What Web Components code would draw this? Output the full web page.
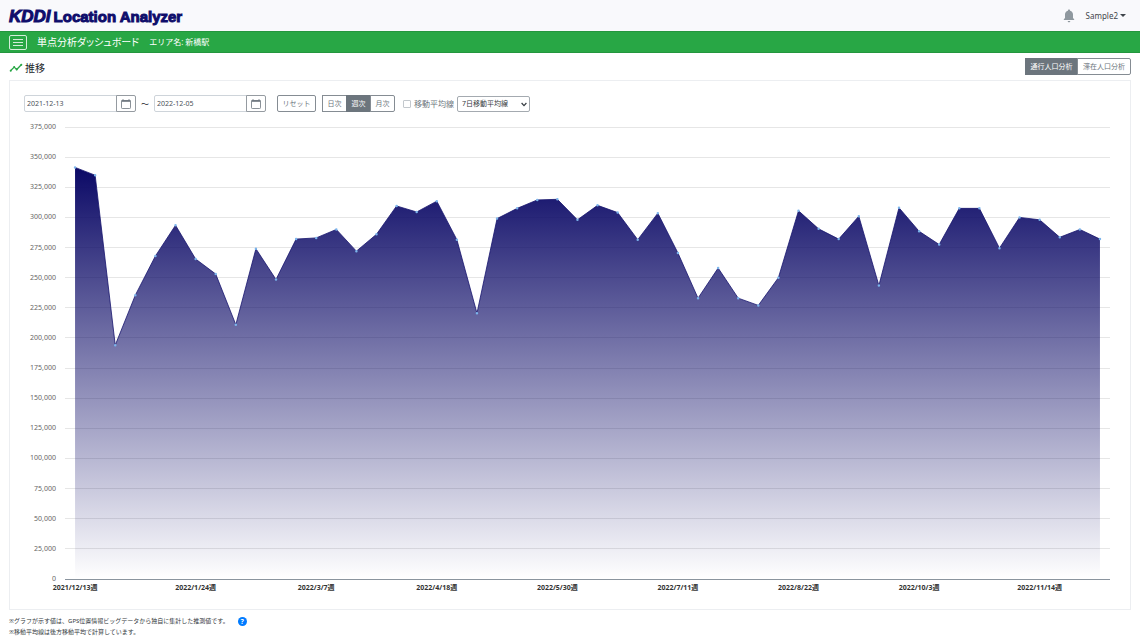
<!DOCTYPE html>
<html lang="ja">
<head>
<meta charset="utf-8">
<title>KDDI Location Analyzer</title>
<style>
  body { margin: 0; font: 8px/12px "Noto Sans", "Noto Sans CJK JP", sans-serif; color: #212529; background: #fff; }
</style>
</head>
<body>
<la-page>
  <la-header slot="header" user="Sample2"></la-header>
  <la-titlebar slot="header" heading="単点分析ダッシュボード">エリア名: 新橋駅</la-titlebar>
  <la-section heading="推移">
    <la-toggle slot="actions" class="wide" options="通行人口分析,滞在人口分析" selected="0"></la-toggle>
    <la-filters></la-filters>
    <la-chart></la-chart>
  </la-section>
  <la-notes slot="footer"></la-notes>
</la-page>
<script>
const define = (name, markup, setup) => customElements.define(name, class extends HTMLElement {
  connectedCallback() {
    if (this.shadowRoot) return;
    this.attachShadow({ mode: 'open' }).innerHTML = markup(this);
    if (setup) setup(this, this.shadowRoot);
  }
});
const attr = (el, name) => el.getAttribute(name) || '';

define('la-page', () => `
<style>
  :host { display: flex; flex-direction: column; min-height: 100vh; }
  main { flex: 1; display: flex; flex-direction: column; padding: 0 9px; }
</style>
<slot name="header"></slot>
<main><slot></slot></main>
<slot name="footer"></slot>`);

define('la-header', el => `
<style>
  :host { display: flex; align-items: center; justify-content: space-between; height: 31px; padding: 0 14px 0 9px; background: #f9f9fc; box-sizing: border-box; }
  a { display: flex; align-items: baseline; gap: 3px; padding-top: 2px; color: #0f0d6b; text-decoration: none; font: bold 15px/20px Impact, "Liberation Sans Narrow", "Liberation Sans", sans-serif; -webkit-text-stroke: 1px #0f0d6b; }
  .mark { font: italic bold 17px/20px "Liberation Sans", sans-serif; }
  .user { display: flex; align-items: center; gap: 11px; }
  button { display: flex; align-items: center; gap: 2px; border: 0; padding: 0; background: none; font: inherit; color: #3f454b; }
  .caret { border: 3px solid transparent; border-top-color: #3f454b; border-bottom: 0; }
  svg { display: block; }
</style>
<a href="#"><span class="mark">KDDI</span><span>Location Analyzer</span></a>
<div class="user">
  <button aria-label="お知らせ"><svg width="12" height="14" viewBox="0 0 12 14" fill="#8f989f"><path d="M6 .6c-.7 0-1.100.5-1.100 1.100C3 2.200 2 3.700 2 5.600V9L.8 10.300v.7h10.400v-.7L10 9V5.600c0-1.900-1-3.400-2.900-3.900C7.100 1.100 6.700.6 6 .6zM4.700 11.900c0 .8.600 1.300 1.300 1.300s1.300-.5 1.300-1.300z"/></svg></button>
  <button>${attr(el, 'user')}<span class="caret"></span></button>
</div>`);

define('la-titlebar', el => `
<style>
  :host { display: flex; align-items: center; gap: 10px; height: 22px; padding: 0 9px; box-sizing: border-box; background: #28a745; border-top: 1px solid #23963e; border-bottom: 1px solid #23963e; color: #fff; }
  button { display: flex; align-items: center; justify-content: center; width: 18px; height: 15px; padding: 0; background: none; border: 1px solid #d4eeda; border-radius: 2px; }
  h1 { margin: 0; font-size: 10px; line-height: 14px; font-weight: 400; font-feature-settings: "palt"; }
</style>
<button aria-label="メニュー"><svg width="10" height="8" viewBox="0 0 10 8" stroke="#fff"><path d="M0 1.500h10M0 4.500h10M0 7.500h10" stroke-width=".8"/></svg></button>
<h1>${attr(el, 'heading')}</h1><slot></slot>`);

define('la-section', el => `
<style>
  :host { flex: 1; display: flex; flex-direction: column; }
  header { display: flex; align-items: center; justify-content: space-between; height: 27px; }
  h2 { display: flex; align-items: center; gap: 2px; margin: 0; padding-top: 2px; font-size: 10px; line-height: 14px; font-weight: 400; }
  .card { flex: 1; display: flex; flex-direction: column; padding: 14px 20px 15px 14px; border: 1px solid #eceef1; }
</style>
<header>
  <h2><svg width="14" height="10" viewBox="0 0 14 10" fill="none" stroke="#28a745" stroke-width="1.300" stroke-linejoin="round"><path d="M1.500 7.800l3.700-3.700 2.500 2.400L12.500 1.500"/><g fill="#28a745" stroke="none"><circle cx="1.700" cy="7.700" r="1"/><circle cx="5.200" cy="4.100" r="1"/><circle cx="7.700" cy="6.500" r="1"/><circle cx="12.300" cy="1.700" r="1"/></g></svg>${attr(el, 'heading')}</h2>
  <slot name="actions"></slot>
</header>
<div class="card"><slot></slot></div>`);

define('la-toggle', el => `
<style>
  :host { display: flex; }
  button { width: 25px; height: 17px; padding: 0; border: 1px solid #858c93; background: #fff; color: #6c757d; font: inherit; font-size: 7px; line-height: 14px; }
  :host(.wide) button { width: 53px; }
  :host(.wide) button + button { width: 54px; }
  button + button { margin-left: -1px; }
  button:first-child { border-radius: 2px 0 0 2px; }
  button:last-child { border-radius: 0 2px 2px 0; }
  button[aria-pressed=true] { background: #6c757d; border-color: #6c757d; color: #fff; }
</style>
${attr(el, 'options').split(',').map((t, i) => `<button aria-pressed="${i == attr(el, 'selected')}">${t}</button>`).join('')}`,
(el, root) => {
  root.addEventListener('click', e => {
    if (e.target.matches('button')) root.querySelectorAll('button').forEach(b => b.setAttribute('aria-pressed', b === e.target));
  });
});

define('la-date', el => `
<style>
  :host { display: flex; height: 17px; width: 112px; }
  input { flex: 1; min-width: 0; box-sizing: border-box; padding: 0 2px; border: 1px solid #ced4da; border-radius: 2px 0 0 2px; font: inherit; font-size: 7px; color: #495057; }
  button { display: flex; align-items: center; justify-content: center; width: 20px; margin-left: -1px; padding: 0; background: #fff; border: 1px solid #959ba1; border-radius: 0 2px 2px 0; }
</style>
<input type="text" aria-label="${attr(el, 'label')}" value="${attr(el, 'value')}">
<button aria-label="カレンダー"><svg width="10" height="10" viewBox="0 0 10 10" fill="none" stroke="#6c757d"><rect x=".5" y="1.500" width="9" height="8" rx=".8" stroke-width=".8"/><path d="M.5 2h9" stroke-width="1.600"/><path d="M2 0v2M8 0v2" stroke-width=".8"/></svg></button>`);

define('la-filters', () => `
<style>
  :host { display: flex; align-items: center; height: 17px; }
  .tilde { width: 18px; text-align: center; }
  .reset { width: 39px; height: 17px; margin: 0 6px 0 11px; padding: 0; border: 1px solid #858c93; border-radius: 2px; background: #fff; color: #6c757d; font: inherit; font-size: 7px; }
  input { appearance: none; width: 8px; height: 8px; margin: 0 3px 0 8px; border: 1px solid #c3c8cd; border-radius: 1px; background: #fff; box-sizing: border-box; }
  input:checked { background: #6c757d; }
  label { font-size: 8px; color: #6c757d; margin-right: 3px; }
  .select { position: relative; }
  select { appearance: none; display: block; width: 73px; height: 16px; padding: 0 4px; border: 1px solid #a4aab0; border-radius: 2px; background: #fff; font: inherit; font-size: 7px; color: #343a40; }
  svg { position: absolute; right: 3px; top: 6px; pointer-events: none; }
</style>
<la-date label="開始日" value="2021-12-13"></la-date>
<span class="tilde">～</span>
<la-date label="終了日" value="2022-12-05"></la-date>
<button class="reset">リセット</button>
<la-toggle options="日次,週次,月次" selected="1"></la-toggle>
<input type="checkbox" id="avg"><label for="avg">移動平均線</label>
<div class="select"><select aria-label="移動平均線の種類"><option>7日移動平均線</option></select>
<svg width="6" height="5" viewBox="0 0 6 5" fill="none" stroke="#343a40" stroke-width="1.200"><path d="M.6 1L3 3.600 5.400 1"/></svg></div>`);

// weekly values in thousands
const VALUES = [341.500, 335, 194, 235.500, 268, 293.500, 265.500, 253, 211, 274, 248.500, 282, 283, 290, 272, 286, 309.500, 304.500, 313.500, 281.500, 220.500, 299, 307.500, 314.500, 315, 298, 310, 304, 281.500, 303.500, 270.500, 233, 258, 233, 227, 250, 305.500, 290.500, 282, 301, 243.500, 308, 288.500, 277.500, 307.500, 307.500, 274.500, 300, 298, 283.500, 290, 282];
const WEEKS = ['2021/12/13週', '2022/1/24週', '2022/3/7週', '2022/4/18週', '2022/5/30週', '2022/7/11週', '2022/8/22週', '2022/10/3週', '2022/11/14週'];
const MAX = 375, STEP = 25;

define('la-chart', () => {
  const n = VALUES.length;
  const pts = VALUES.map((v, i) => `${i + .5} ${MAX - v}`);
  const ticks = Array.from({ length: MAX / STEP + 1 }, (_, i) => MAX - i * STEP);
  return `
<style>
  :host { flex: 1; display: grid; grid-template-columns: 32px 1fr; grid-template-rows: 1fr 15px; column-gap: 9px; padding-top: 15px; }
  .y { display: flex; flex-direction: column; justify-content: space-between; margin: -6px 0; text-align: right; font-size: 7px; line-height: 12px; color: #666; }
  .plot { position: relative; }
  svg { position: absolute; inset: 0; width: 100%; height: 100%; overflow: visible; }
  svg * { vector-effect: non-scaling-stroke; }
  .grid, .axis { fill: none; stroke: #e6e6e6; shape-rendering: crispEdges; }
  .axis { stroke: #8a949e; }
  .line { fill: none; stroke: #17146d; stroke-width: .8; }
  .dots { fill: none; stroke: #7cb5ec; stroke-width: 2.500; stroke-linecap: round; }
  .x { grid-column: 2; display: grid; grid-template-columns: repeat(${n}, minmax(0, 1fr)); padding-top: 3px; font-size: 7px; line-height: 12px; font-weight: 700; color: #333; }
  .x span { display: flex; justify-content: center; white-space: nowrap; }
</style>
<div class="y">${ticks.map(t => `<span>${t ? t + ',000' : '0'}</span>`).join('')}</div>
<div class="plot"><svg viewBox="0 0 ${n} ${MAX}" preserveAspectRatio="none" role="img" aria-label="推移">
  <defs><linearGradient id="fade" x1="0" y1="0" x2="0" y2="1"><stop stop-color="#0b0966"/><stop offset="1" stop-color="#0b0966" stop-opacity="0"/></linearGradient></defs>
  <path class="grid" d="${ticks.slice(0, -1).map(t => `M0 ${MAX - t}H${n}`).join('')}"/>
  <path fill="url(#fade)" d="M.5 ${MAX}L${pts.join('L')}V${MAX}Z"/>
  <path class="line" d="M${pts.join('L')}"/>
  <path class="dots" d="${pts.map(p => `M${p}h0`).join('')}"/>
  <path class="axis" d="M0 ${MAX}H${n}"/>
</svg></div>
<div class="x">${WEEKS.map((w, i) => `<span style="grid-column:${i * 6 + 1}">${w}</span>`).join('')}</div>`;
});

define('la-notes', () => `
<style>
  :host { display: block; padding: 6px 9px 2px; font-size: 6px; line-height: 11px; color: #343a40; }
  p { display: flex; align-items: center; gap: 9px; margin: 0; }
  button { width: 9px; height: 9px; padding: 0; border: 0; border-radius: 50%; background: #007bff; color: #fff; font: inherit; font-size: 7px; line-height: 9px; font-weight: 700; }
</style>
<p>※グラフが示す値は、GPS位置情報ビッグデータから独自に集計した推測値です。<button aria-label="ヘルプ">?</button></p>
<p>※移動平均線は後方移動平均で計算しています。</p>`);
</script>
</body>
</html>
